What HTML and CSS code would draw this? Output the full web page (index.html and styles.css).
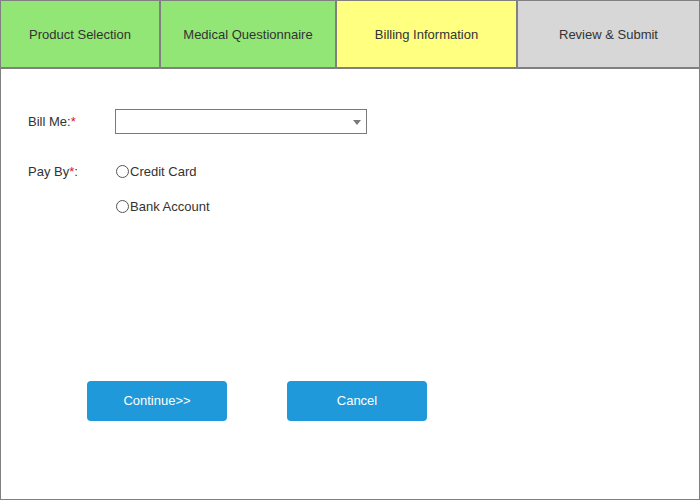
FILE: index.html
```html
<!DOCTYPE html>
<html>
<head>
<meta charset="utf-8">
<link rel="stylesheet" href="styles.css">
</head>
<body>
<div class="frame">
  <div class="tabs">
    <div class="tab tab-done tab-w1">Product Selection</div>
    <div class="tab tab-done tab-w2">Medical Questionnaire</div>
    <div class="tab tab-current tab-w3">Billing Information</div>
    <div class="tab tab-todo tab-w4">Review &amp; Submit</div>
  </div>
  <div class="form">
    <div class="row row-bill">
      <div class="label">Bill Me:<span class="req">*</span></div>
      <div class="select">
        <span class="caret"></span>
      </div>
    </div>
    <div class="row row-pay">
      <div class="label">Pay By<span class="req">*</span>:</div>
      <div class="options">
        <div class="option"><span class="radio"></span>Credit Card</div>
        <div class="option"><span class="radio"></span>Bank Account</div>
      </div>
    </div>
    <div class="actions">
      <div class="btn">Continue&gt;&gt;</div>
      <div class="btn">Cancel</div>
    </div>
  </div>
</div>
</body>
</html>
```
FILE: styles.css
```css
html, body {
  margin: 0;
  padding: 0;
  background: #fff;
}
body {
  font-family: "Liberation Sans", Arial, sans-serif;
  font-size: 13px;
  color: #333;
}
.frame {
  width: 700px;
  height: 500px;
  box-sizing: border-box;
  border: 1px solid #808080;
  overflow: hidden;
}
.tabs {
  display: flex;
  margin: -1px -1px 0 -1px;
  border-bottom: 1px solid #808080;
}
.tab {
  box-sizing: border-box;
  height: 68px;
  border: 1px solid #808080;
  display: flex;
  align-items: center;
  justify-content: center;
  padding-top: 1px;
}
.tab-w1 { width: 160px; }
.tab-w2 { width: 176px; }
.tab-w3 { width: 181px; }
.tab-w4 { flex: 1; }
.tab-done { background: #92e675; }
.tab-current { background: #ffff80; }
.tab-todo { background: #d7d7d7; }

.form {
  padding: 40px 0 0 27px;
}
.row {
  display: flex;
}
.label {
  width: 87px;
  flex: none;
}
.req {
  color: #e0102a;
}
.row-bill {
  align-items: center;
  height: 24px;
}
.select {
  position: relative;
  box-sizing: border-box;
  width: 252px;
  height: 25px;
  border: 1px solid #7a7a7a;
  background: #fff;
}
.caret {
  position: absolute;
  right: 5px;
  top: 10px;
  width: 0;
  height: 0;
  border-left: 4.5px solid transparent;
  border-right: 4.5px solid transparent;
  border-top: 5px solid #7a7a7a;
}
.row-pay {
  margin-top: 30px;
}
.row-pay .label {
  line-height: 16px;
  padding-top: 1px;
}
.options {
  display: flex;
  flex-direction: column;
  gap: 19px;
}
.option {
  display: flex;
  align-items: center;
  height: 16px;
  margin-left: 1px;
}
.radio {
  box-sizing: border-box;
  width: 13px;
  height: 13px;
  border: 1px solid #555;
  border-radius: 50%;
  margin-right: 1px;
  margin-top: 1px;
}
.actions {
  display: flex;
  gap: 60px;
  margin-top: 167px;
  margin-left: 59px;
}
.btn {
  box-sizing: border-box;
  width: 140px;
  height: 40px;
  border-radius: 4px;
  background: #1f99d9;
  color: #fff;
  display: flex;
  align-items: center;
  justify-content: center;
  padding-bottom: 1px;
}
```
